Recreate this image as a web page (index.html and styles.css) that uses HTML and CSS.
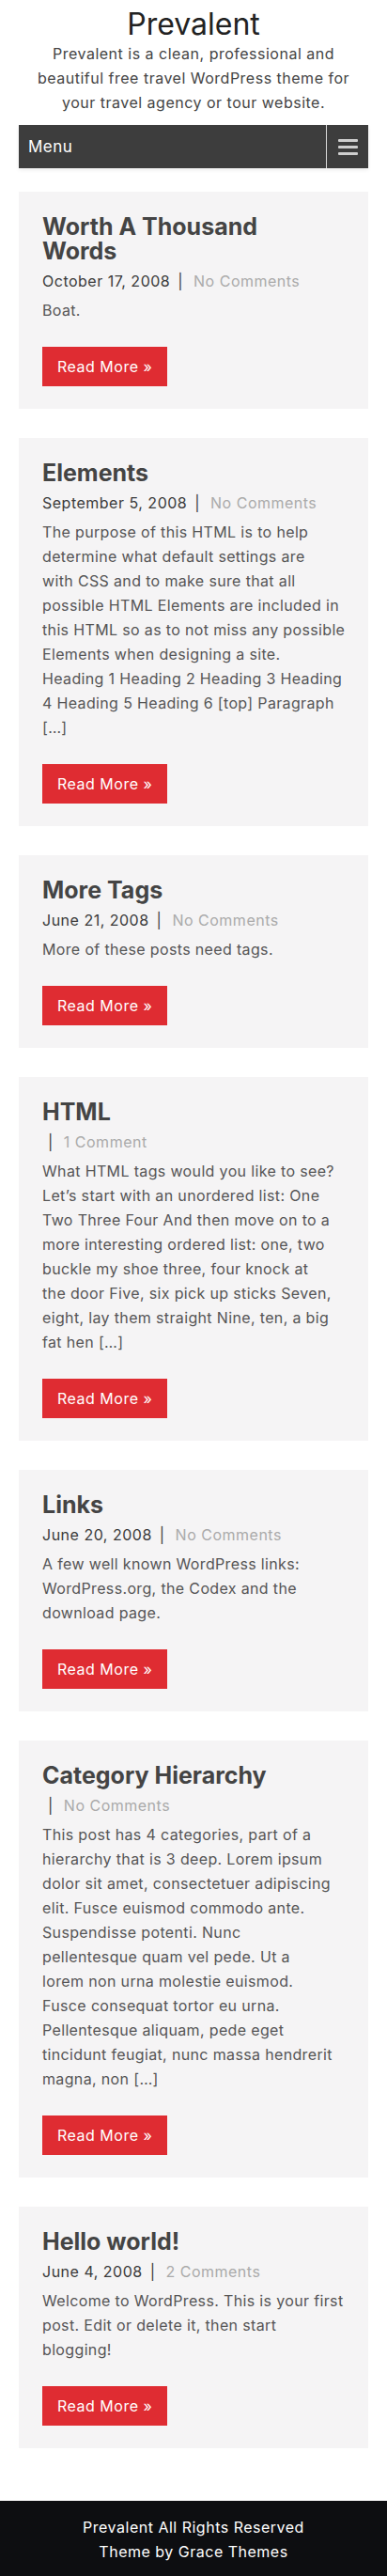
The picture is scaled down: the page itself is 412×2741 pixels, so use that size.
FILE: index.html
```html
<!DOCTYPE html>
<html>
<head>
    <title>Prevalent</title>
    <link rel="stylesheet" href="styles.css">
</head>
<body>
    <header class="site-header">
        <h1 class="site-title">Prevalent</h1>
        <p class="site-tagline">Prevalent is a clean, professional and beautiful free travel WordPress theme for your travel agency or tour website.</p>
        <nav class="menu-bar">
            <span class="menu-label">Menu</span>
            <span class="menu-toggle">
                <span class="bar"></span>
                <span class="bar"></span>
                <span class="bar"></span>
            </span>
        </nav>
    </header>

    <main class="posts">
        <article class="post">
            <h2 class="post-title">Worth A Thousand<br>Words</h2>
            <div class="post-meta"><span class="post-date">October 17, 2008</span><span class="sep">|</span><a class="comments" href="#">No Comments</a></div>
            <p class="excerpt">Boat.</p>
            <a class="read-more" href="#">Read More &raquo;</a>
        </article>

        <article class="post">
            <h2 class="post-title">Elements</h2>
            <div class="post-meta"><span class="post-date">September 5, 2008</span><span class="sep">|</span><a class="comments" href="#">No Comments</a></div>
            <p class="excerpt">The purpose of this HTML is to help<br>determine what default settings are<br>with CSS and to make sure that all<br>possible HTML Elements are included in<br>this HTML so as to not miss any possible<br>Elements when designing a site.<br>Heading 1 Heading 2 Heading 3 Heading<br>4 Heading 5 Heading 6 [top] Paragraph<br>[&hellip;]</p>
            <a class="read-more" href="#">Read More &raquo;</a>
        </article>

        <article class="post">
            <h2 class="post-title">More Tags</h2>
            <div class="post-meta"><span class="post-date">June 21, 2008</span><span class="sep">|</span><a class="comments" href="#">No Comments</a></div>
            <p class="excerpt">More of these posts need tags.</p>
            <a class="read-more" href="#">Read More &raquo;</a>
        </article>

        <article class="post">
            <h2 class="post-title">HTML</h2>
            <div class="post-meta"><span class="sep no-date">|</span><a class="comments" href="#">1 Comment</a></div>
            <p class="excerpt">What HTML tags would you like to see?<br>Let&rsquo;s start with an unordered list: One<br>Two Three Four And then move on to a<br>more interesting ordered list: one, two<br>buckle my shoe three, four knock at<br>the door Five, six pick up sticks Seven,<br>eight, lay them straight Nine, ten, a big<br>fat hen [&hellip;]</p>
            <a class="read-more" href="#">Read More &raquo;</a>
        </article>

        <article class="post">
            <h2 class="post-title">Links</h2>
            <div class="post-meta"><span class="post-date">June 20, 2008</span><span class="sep">|</span><a class="comments" href="#">No Comments</a></div>
            <p class="excerpt">A few well known WordPress links:<br>WordPress.org, the Codex and the<br>download page.</p>
            <a class="read-more" href="#">Read More &raquo;</a>
        </article>

        <article class="post">
            <h2 class="post-title">Category Hierarchy</h2>
            <div class="post-meta"><span class="sep no-date">|</span><a class="comments" href="#">No Comments</a></div>
            <p class="excerpt">This post has 4 categories, part of a<br>hierarchy that is 3 deep. Lorem ipsum<br>dolor sit amet, consectetuer adipiscing<br>elit. Fusce euismod commodo ante.<br>Suspendisse potenti. Nunc<br>pellentesque quam vel pede. Ut a<br>lorem non urna molestie euismod.<br>Fusce consequat tortor eu urna.<br>Pellentesque aliquam, pede eget<br>tincidunt feugiat, nunc massa hendrerit<br>magna, non [&hellip;]</p>
            <a class="read-more" href="#">Read More &raquo;</a>
        </article>

        <article class="post">
            <h2 class="post-title">Hello world!</h2>
            <div class="post-meta"><span class="post-date">June 4, 2008</span><span class="sep">|</span><a class="comments" href="#">2 Comments</a></div>
            <p class="excerpt">Welcome to WordPress. This is your first<br>post. Edit or delete it, then start<br>blogging!</p>
            <a class="read-more" href="#">Read More &raquo;</a>
        </article>
    </main>

    <footer class="site-footer">
        <p>Prevalent All Rights Reserved</p>
        <p>Theme by Grace Themes</p>
    </footer>
</body>
</html>
```

FILE: styles.css
```css
body {
    margin: 0;
    background: #fff;
    font-family: Inter, "Open Sans", sans-serif;
    font-size: 16px;
    letter-spacing: 0.5px;
    color: #555;
}

p {
    margin: 0;
}

a {
    text-decoration: none;
}

.site-header {
    padding: 8px 20px 0;
    text-align: center;
}

.site-title {
    margin: 0;
    font-size: 32px;
    line-height: 36px;
    font-weight: 400;
    letter-spacing: 0;
    color: #222;
}

.site-tagline {
    line-height: 26px;
    color: #444;
    padding: 0 10px;
}

.menu-bar {
    display: flex;
    align-items: stretch;
    height: 46px;
    margin-top: 11px;
    background: #3d3d3d;
    box-shadow: 0 2px 4px rgba(0, 0, 0, 0.08);
    text-align: left;
}

.menu-label {
    flex: 1;
    display: flex;
    align-items: center;
    padding-left: 10px;
    font-size: 17px;
    color: #fff;
}

.menu-toggle {
    width: 44px;
    border-left: 1px solid #d8d8d8;
    display: flex;
    flex-direction: column;
    justify-content: center;
    align-items: center;
    gap: 4px;
}

.menu-toggle .bar {
    display: block;
    width: 21px;
    height: 3px;
    background: #cfcfcf;
    border-radius: 1px;
}

.posts {
    padding: 25px 20px 25px;
}

.post {
    background: #f5f4f5;
    padding: 24px 25px 24px;
    margin-bottom: 31px;
}

.post-title {
    margin: 0 0 6px;
    font-size: 25px;
    line-height: 26px;
    font-weight: 700;
    letter-spacing: 0;
    color: #444;
}

.post-meta {
    line-height: 26px;
    color: #3a3a3a;
    margin-bottom: 5px;
}

.sep {
    margin: 0 11px 0 8px;
}

.sep.no-date {
    margin-left: 6px;
}

.comments {
    color: #aaa;
}

.excerpt {
    line-height: 26px;
    letter-spacing: 0.35px;
    white-space: nowrap;
}

.read-more {
    display: inline-block;
    margin-top: 26px;
    height: 42px;
    line-height: 42px;
    padding: 0 16px;
    background: #df2c32;
    color: #fff;
}

.site-footer {
    background: #0d0e11;
    color: #fff;
    text-align: center;
    padding: 15px 20px;
    line-height: 26px;
}
```
